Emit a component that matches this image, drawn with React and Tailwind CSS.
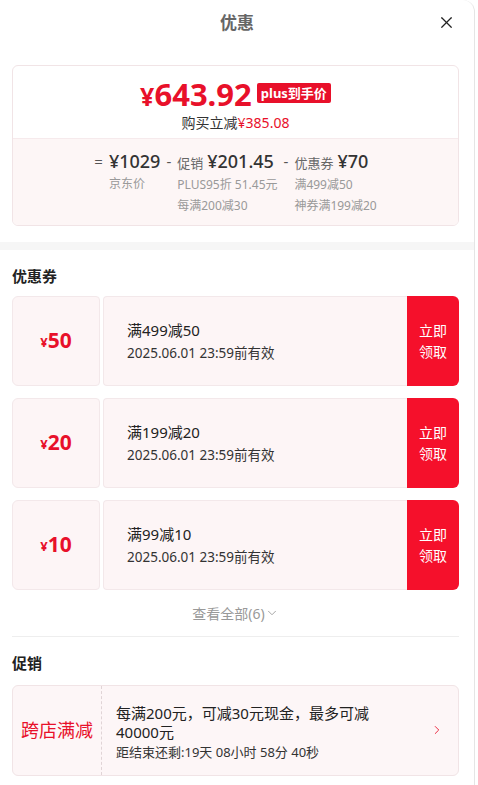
import { X, ChevronDown, ChevronRight } from "lucide-react";

const coupons = [
  { amount: "50", title: "满499减50", date: "2025.06.01 23:59前有效" },
  { amount: "20", title: "满199减20", date: "2025.06.01 23:59前有效" },
  { amount: "10", title: "满99减10", date: "2025.06.01 23:59前有效" },
];

function Breakdown({ sign, label, value, lines }) {
  return (
    <div className="flex items-start gap-[6px]">
      <span className="text-[15px] leading-[24px] text-[#555]">{sign}</span>
      <div className="flex flex-col">
        <div className="flex items-baseline gap-[4px]">
          {label && <span className="text-[13px] text-[#666]">{label}</span>}
          <span className="text-[18px] leading-[24px] font-medium text-[#333]">{value}</span>
        </div>
        {lines.map((l) => (
          <div key={l} className="text-[12px] leading-[21px] text-[#999] whitespace-nowrap">
            {l}
          </div>
        ))}
      </div>
    </div>
  );
}

function Coupon({ amount, title, date }) {
  return (
    <div className="flex h-[90px]">
      <div className="w-[88px] bg-[#fdf5f6] border border-[#f3e8ea] rounded-l-md rounded-r-sm flex items-center justify-center text-[#e8102a] font-bold">
        <span className="text-[13px] mt-[4px]">¥</span>
        <span className="text-[21px]">{amount}</span>
      </div>
      <div className="ml-[3px] flex-1 bg-[#fdf5f6] border border-[#f3e8ea] border-r-0 rounded-l-sm flex flex-col justify-center pl-[23px]">
        <div className="text-[15px] leading-[22px] text-[#222]">{title}</div>
        <div className="text-[13.5px] leading-[22px] text-[#333] mt-[1px]">{date}</div>
      </div>
      <div className="w-[52px] bg-[#f5102b] rounded-r-md flex flex-col items-center justify-center text-white text-[14px] leading-[21px]">
        <span>立即</span>
        <span>领取</span>
      </div>
    </div>
  );
}

export default function App() {
  return (
    <div className="w-[478px] min-h-[785px] bg-white" style={{ fontFamily: '"Noto Sans", "Noto Sans CJK SC", sans-serif' }}>
      <div className="w-[475px] min-h-[785px] border-r border-[#e5e5e5] rounded-tr-xl overflow-hidden">
        {/* header */}
        <div className="relative h-[45px] flex items-center justify-center">
          <span className="text-[17px] font-bold text-[#666]">优惠</span>
          <X className="absolute right-[18px] top-[13px] text-[#222]" size={19} strokeWidth={1.5} />
        </div>

        {/* summary card */}
        <div className="ml-[12px] mr-[15px] mt-[20px] border border-[#f1e4e6] rounded-md overflow-hidden">
          <div className="flex flex-col items-center pt-[11px] pb-[5px]">
            <div className="flex items-center gap-[5px] h-[34px]">
              <span className="text-[#e8102a] font-bold leading-none">
                <span className="text-[25px]">¥</span>
                <span className="text-[31px]">643.92</span>
              </span>
              <span className="bg-[#e8102a] text-white text-[13px] font-bold px-[4px] h-[20px] leading-[20px] rounded-[2px] mb-[2px]">
                plus到手价
              </span>
            </div>
            <div className="text-[14px] leading-[20px] text-[#333] mt-[2px]">
              购买立减<span className="text-[#e8102a]">¥385.08</span>
            </div>
          </div>
          <div className="bg-[#fdf6f6] border-t border-[#f6eaec] flex justify-center gap-[6px] pt-[10px] pb-[9px]">
            <Breakdown sign="=" value="¥1029" lines={["京东价"]} />
            <Breakdown sign="-" label="促销" value="¥201.45" lines={["PLUS95折 51.45元", "每满200减30"]} />
            <Breakdown sign="-" label="优惠券" value="¥70" lines={["满499减50", "神券满199减20"]} />
          </div>
        </div>

        <div className="h-[8px] bg-[#f6f6f6] mt-[16px]" />

        {/* coupons */}
        <div className="pl-[12px] pr-[15px]">
          <div className="text-[15px] font-bold text-[#222] mt-[15px] mb-[9px]">优惠券</div>
          <div className="flex flex-col gap-[12px]">
            {coupons.map((c) => (
              <Coupon key={c.amount} {...c} />
            ))}
          </div>
          <div className="flex items-center justify-center text-[14px] text-[#999] h-[46px]">
            查看全部(6)
            <ChevronDown size={14} strokeWidth={1.5} />
          </div>
          <div className="border-t border-[#eee]" />

          {/* promotion */}
          <div className="text-[15px] font-bold text-[#222] mt-[15px] mb-[10px]">促销</div>
          <div className="flex h-[91px] bg-[#fdf6f7] border border-[#f1e4e6] rounded-md">
            <div className="w-[89px] flex items-center justify-center text-[#e8102a] text-[18px] border-r border-dashed border-[#e0d4d6]">
              跨店满减
            </div>
            <div className="flex-1 flex flex-col justify-center pl-[14px] pr-[8px] pt-[6px]">
              <div className="text-[15px] leading-[19px] text-[#222]">
                每满200元，可减30元现金，最多可减
                <br />
                40000元
              </div>
              <div className="text-[13px] leading-[20px] text-[#333]">距结束还剩:19天 08小时 58分 40秒</div>
            </div>
            <div className="flex items-center pr-[14px] text-[#e8102a]">
              <ChevronRight size={14} strokeWidth={1.5} />
            </div>
          </div>
        </div>
      </div>
    </div>
  );
}
